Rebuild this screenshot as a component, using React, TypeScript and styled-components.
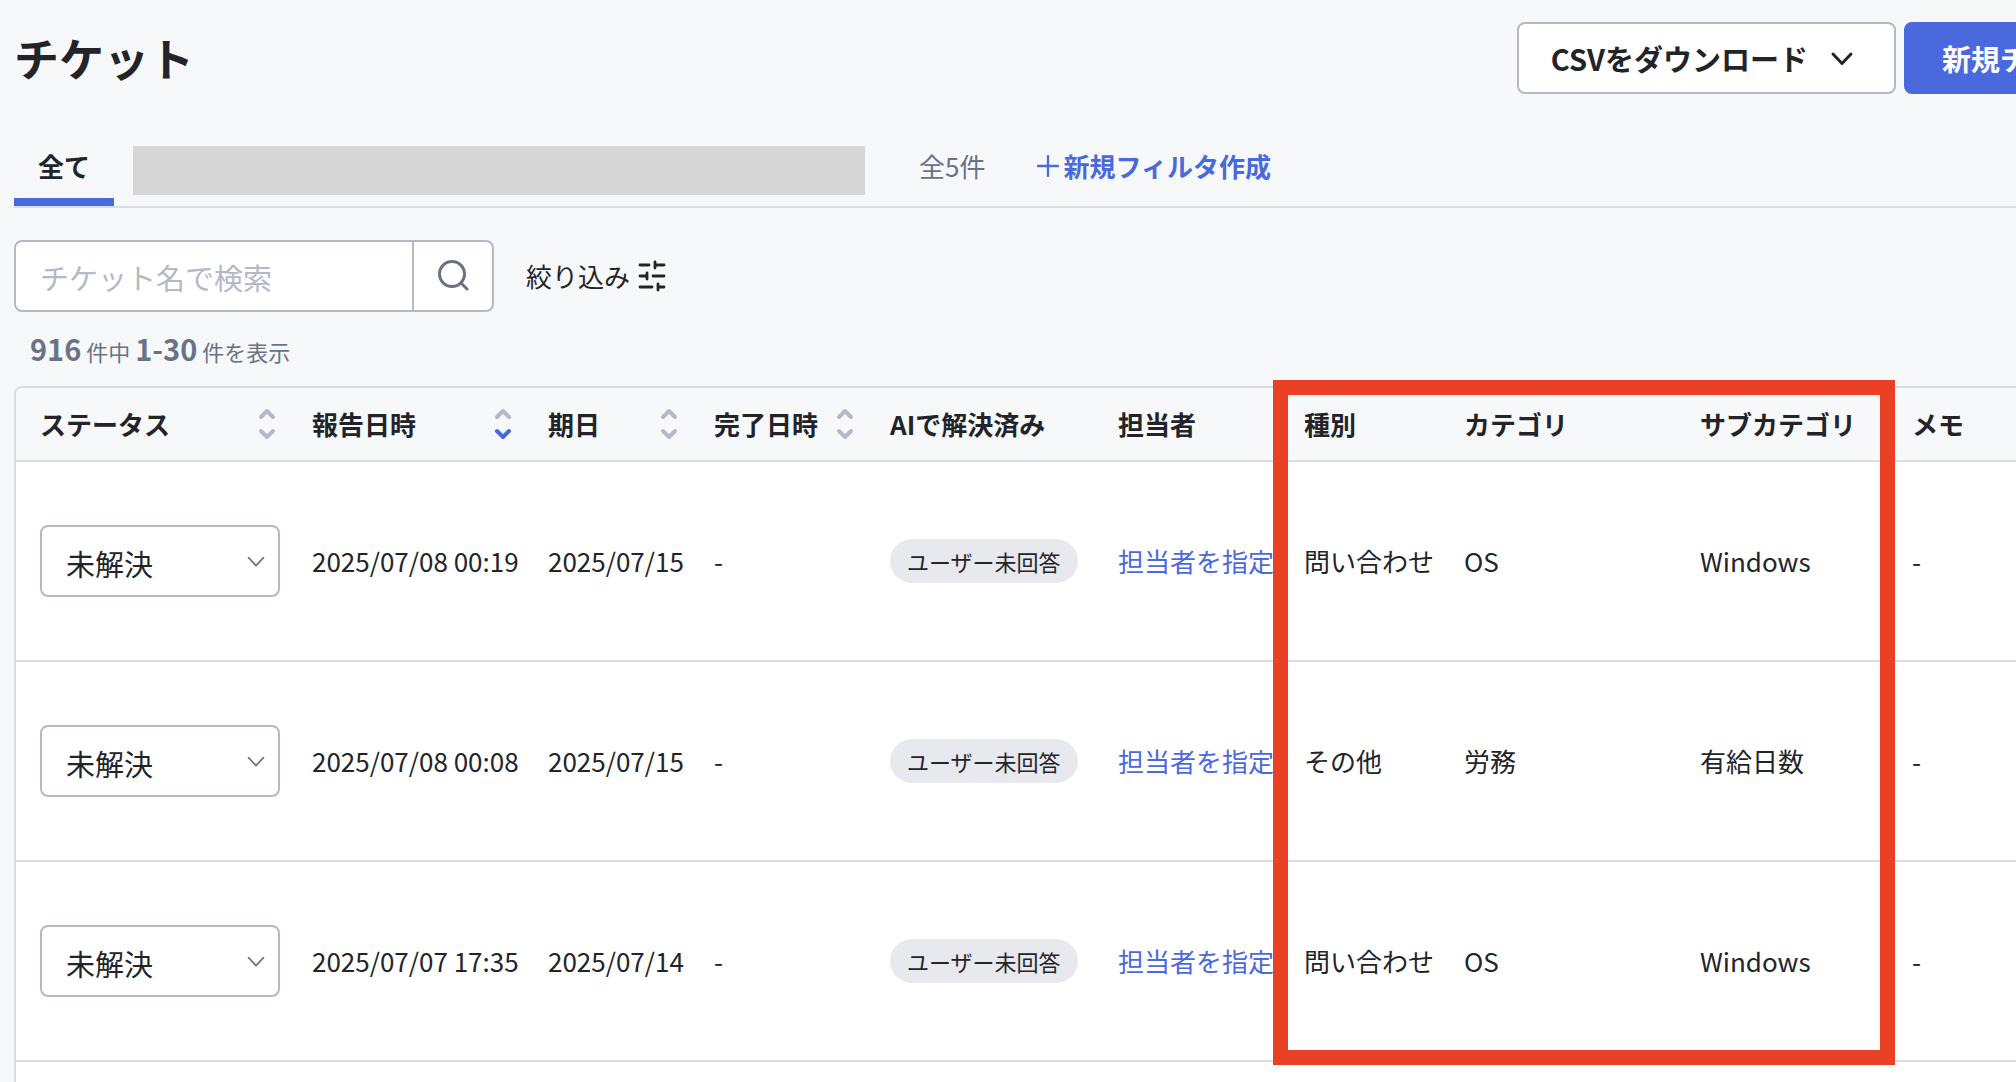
import React from "react";
import styled, { createGlobalStyle } from "styled-components";

const color = {
  page: "#f7f8fa",
  white: "#ffffff",
  text: "#23242a",
  muted: "#6a7286",
  line: "#d7dce5",
  rule: "#d6dee5",
  control: "#b3b9c9",
  blue: "#4a69dc",
  badge: "#e8e9ee",
  mask: "#d6d6d6",
  red: "#ea4026",
};

const Global = createGlobalStyle`
  *, *::before, *::after { box-sizing: border-box; }
  body {
    margin: 0;
    background: ${color.page};
    color: ${color.text};
    font-family: "Noto Sans CJK JP", sans-serif;
    font-size: 26px;
    line-height: 36px;
  }
  button, input, select { font: inherit; color: inherit; margin: 0; }
`;

const Viewport = styled.div`
  height: 100vh;
  overflow: hidden;
`;

/* The ticket board is wider than the window and runs off its right side. */
const Page = styled.main`
  width: calc(100% + 208px);
  padding: 22px 12px 0 14px;
`;

const Header = styled.header`
  display: flex;
  align-items: flex-start;
  justify-content: space-between;
`;

const Title = styled.h1`
  margin: 0;
  padding-top: 4px;
  font-size: 45px;
  line-height: 64px;
  font-weight: 700;
`;

const Actions = styled.div`
  display: flex;
  gap: 8px;
`;

const Button = styled.button<{ $primary?: boolean }>`
  display: flex;
  align-items: center;
  gap: 22px;
  height: 72px;
  padding: ${(p) => (p.$primary ? "0 36px" : "0 40px 0 32px")};
  border: 2px solid ${(p) => (p.$primary ? color.blue : color.control)};
  border-radius: 8px;
  background: ${(p) => (p.$primary ? color.blue : color.white)};
  color: ${(p) => (p.$primary ? color.white : color.text)};
  font-size: 29px;
  font-weight: 700;
  white-space: nowrap;
`;

const Tabs = styled.nav`
  display: flex;
  align-items: flex-start;
  height: 78px;
  margin-top: 36px;
  border-bottom: 2px solid ${color.rule};
`;

const Tab = styled.button`
  height: 76px;
  padding: 4px 24px 0;
  border: 0;
  border-bottom: 8px solid ${color.blue};
  background: none;
  font-weight: 700;
`;

const Masked = styled.div`
  width: 732px;
  height: 49px;
  margin: 16px 54px 0 19px;
  background: ${color.mask};
`;

const FilterCount = styled.span`
  padding-top: 18px;
  margin-right: 52px;
  color: ${color.muted};
`;

const NewFilter = styled.button`
  display: flex;
  align-items: center;
  gap: 4px;
  padding: 18px 0 0;
  border: 0;
  background: none;
  color: ${color.blue};
  font-weight: 700;
`;

const Toolbar = styled.div`
  display: flex;
  align-items: center;
  gap: 32px;
  margin-top: 32px;
`;

const Search = styled.form`
  display: flex;
  width: 480px;
  height: 72px;
  border: 2px solid ${color.control};
  border-radius: 8px;
  background: ${color.white};
  overflow: hidden;
`;

const SearchInput = styled.input`
  flex: 1;
  min-width: 0;
  padding: 2px 24px 0;
  border: 0;
  outline: 0;
  background: none;
  font-size: 29px;
  &::placeholder { color: ${color.control}; opacity: 1; }
`;

const SearchButton = styled.button`
  display: flex;
  align-items: center;
  justify-content: center;
  width: 80px;
  padding: 0;
  border: 0;
  border-left: 2px solid ${color.control};
  background: none;
  color: ${color.muted};
`;

const Refine = styled.button`
  display: flex;
  align-items: center;
  gap: 6px;
  padding: 0;
  border: 0;
  background: none;
`;

const Summary = styled.p`
  height: 44px;
  margin: 14px 0 0;
  padding-left: 16px;
  color: ${color.muted};
  font-size: 22px;
  line-height: 44px;
  b { font-size: 29px; }
`;

const Board = styled.section`
  position: relative;
  margin-top: 16px;
`;

const Frame = styled.div`
  border: 2px solid ${color.line};
  border-radius: 8px;
  background: ${color.white};
  overflow: hidden;
`;

const Table = styled.table`
  width: 100%;
  table-layout: fixed;
  border-collapse: separate;
  border-spacing: 0;
`;

const Column = styled.col<{ $width?: number }>`
  width: ${(p) => (p.$width ? `${p.$width}px` : "auto")};
`;

const HeadCell = styled.th`
  height: 74px;
  padding: 0 16px;
  border-bottom: 2px solid ${color.line};
  background: ${color.page};
  font-weight: 700;
  text-align: left;
  white-space: nowrap;
  &:first-child { padding-left: 24px; }
`;

const HeadInner = styled.div`
  display: flex;
  align-items: center;
  justify-content: space-between;
`;

const SortButton = styled.button`
  display: flex;
  margin-right: 4px;
  padding: 0;
  border: 0;
  background: none;
`;

const Cell = styled.td`
  height: 200px;
  padding: 0 16px;
  border-bottom: 2px solid ${color.line};
  white-space: nowrap;
  &:first-child { padding-left: 24px; }
`;

const SelectBox = styled.div`
  display: grid;
  align-items: center;
  width: 240px;
  > * { grid-area: 1 / 1; }
  > svg { justify-self: end; margin-right: 14px; pointer-events: none; }
`;

const Select = styled.select`
  appearance: none;
  width: 100%;
  height: 72px;
  padding: 4px 48px 0 24px;
  border: 2px solid ${color.control};
  border-radius: 8px;
  background: ${color.white};
  font-size: 29px;
`;

const Badge = styled.span`
  display: inline-block;
  padding: 0 17px;
  border-radius: 22px;
  background: ${color.badge};
  font-size: 22px;
  line-height: 44px;
`;

const AssignLink = styled.a`
  color: ${color.blue};
  text-decoration: none;
`;

const Highlight = styled.div`
  position: absolute;
  top: -6px;
  left: 1259px;
  width: 622px;
  height: 685px;
  border: 15px solid ${color.red};
  pointer-events: none;
`;

const Chevron = ({ size, stroke, width }: { size: number; stroke: string; width: number }) => (
  <svg width={size} height={size} viewBox="0 0 24 24" fill="none" stroke={stroke} strokeWidth={width} strokeLinecap="round" strokeLinejoin="round" aria-hidden>
    <path d="M3 8l9 9.500 9-9.500" />
  </svg>
);

const SortIcon = ({ active }: { active?: boolean }) => (
  <svg width="18" height="32" viewBox="0 0 18 32" fill="none" strokeWidth="4" strokeLinecap="round" strokeLinejoin="round" aria-hidden>
    <path d="M3 9 9 3l6 6" stroke={color.control} />
    <path d="m3 23 6 6 6-6" stroke={active ? color.blue : color.control} />
  </svg>
);

const SearchIcon = () => (
  <svg width="32" height="32" viewBox="0 0 32 32" fill="none" stroke="currentColor" strokeWidth="3" strokeLinecap="round" aria-hidden>
    <circle cx="15" cy="14" r="12.500" />
    <path d="m24 23 6 6" />
  </svg>
);

const PlusIcon = () => (
  <svg width="22" height="22" viewBox="0 0 22 22" stroke="currentColor" strokeWidth="2.300" strokeLinecap="round" aria-hidden>
    <path d="M11 1v20M1 11h20" />
  </svg>
);

const TuneIcon = () => (
  <svg width="32" height="32" viewBox="0 0 32 32" stroke="currentColor" strokeWidth="2.800" strokeLinecap="round" aria-hidden>
    <path d="M4 5h9M19 5h9M19 2v6M4 16h7M11 13v6M17 16h11M4 27h12M22 27h6M22 24v6" />
  </svg>
);

const columns: { label: string; width?: number; sort?: "idle" | "active" }[] = [
  { label: "ステータス", width: 280, sort: "idle" },
  { label: "報告日時", width: 236, sort: "active" },
  { label: "期日", width: 166, sort: "idle" },
  { label: "完了日時", width: 176, sort: "idle" },
  { label: "AIで解決済み", width: 228 },
  { label: "担当者", width: 186 },
  { label: "種別", width: 160 },
  { label: "カテゴリ", width: 236 },
  { label: "サブカテゴリ", width: 212 },
  { label: "メモ" },
];

const tickets = [
  { reported: "2025/07/08 00:19", due: "2025/07/15", kind: "問い合わせ", category: "OS", sub: "Windows" },
  { reported: "2025/07/08 00:08", due: "2025/07/15", kind: "その他", category: "労務", sub: "有給日数" },
  { reported: "2025/07/07 17:35", due: "2025/07/14", kind: "問い合わせ", category: "OS", sub: "Windows" },
];

export default function App() {
  return (
    <>
      <Global />
      <Viewport>
        <Page>
          <Header>
            <Title>チケット</Title>
            <Actions>
              <Button type="button">
                CSVをダウンロード
                <Chevron size={24} stroke={color.text} width={3} />
              </Button>
              <Button type="button" $primary>新規チケット作成</Button>
            </Actions>
          </Header>

          <Tabs aria-label="フィルタ">
            <Tab type="button">全て</Tab>
            <Masked />
            <FilterCount>全5件</FilterCount>
            <NewFilter type="button">
              <PlusIcon />
              新規フィルタ作成
            </NewFilter>
          </Tabs>

          <Toolbar>
            <Search role="search" onSubmit={(e) => e.preventDefault()}>
              <SearchInput type="text" placeholder="チケット名で検索" aria-label="チケット名で検索" />
              <SearchButton type="submit" aria-label="検索">
                <SearchIcon />
              </SearchButton>
            </Search>
            <Refine type="button">
              絞り込み
              <TuneIcon />
            </Refine>
          </Toolbar>

          <Summary>
            <b>916</b> 件中 <b>1-30</b> 件を表示
          </Summary>

          <Board>
            <Frame>
              <Table>
                <colgroup>
                  {columns.map((c) => (
                    <Column key={c.label} $width={c.width} />
                  ))}
                </colgroup>
                <thead>
                  <tr>
                    {columns.map((c) => (
                      <HeadCell key={c.label} scope="col">
                        <HeadInner>
                          {c.label}
                          {c.sort && (
                            <SortButton type="button" aria-label={`${c.label}で並べ替え`}>
                              <SortIcon active={c.sort === "active"} />
                            </SortButton>
                          )}
                        </HeadInner>
                      </HeadCell>
                    ))}
                  </tr>
                </thead>
                <tbody>
                  {tickets.map((t) => (
                    <tr key={t.reported}>
                      <Cell>
                        <SelectBox>
                          <Select aria-label="ステータス" defaultValue="未解決">
                            <option>未解決</option>
                          </Select>
                          <Chevron size={20} stroke={color.muted} width={2} />
                        </SelectBox>
                      </Cell>
                      <Cell>{t.reported}</Cell>
                      <Cell>{t.due}</Cell>
                      <Cell>-</Cell>
                      <Cell><Badge>ユーザー未回答</Badge></Cell>
                      <Cell><AssignLink href="#assign">担当者を指定</AssignLink></Cell>
                      <Cell>{t.kind}</Cell>
                      <Cell>{t.category}</Cell>
                      <Cell>{t.sub}</Cell>
                      <Cell>-</Cell>
                    </tr>
                  ))}
                  <tr>
                    <Cell colSpan={columns.length} />
                  </tr>
                </tbody>
              </Table>
            </Frame>
            <Highlight />
          </Board>
        </Page>
      </Viewport>
    </>
  );
}
